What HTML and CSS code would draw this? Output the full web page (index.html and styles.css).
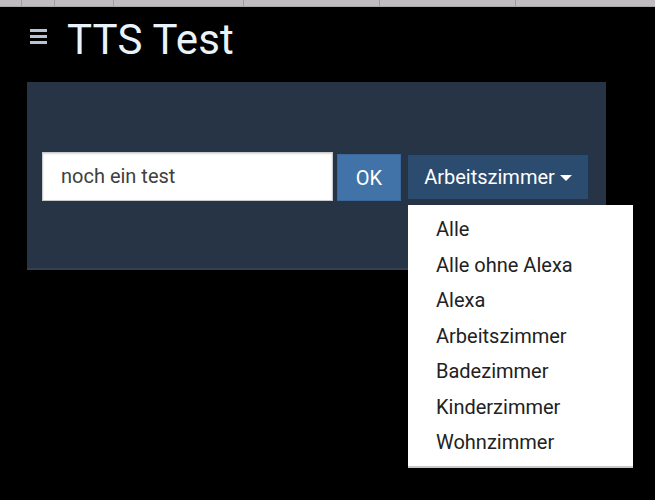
FILE: index.html
```html
<!DOCTYPE html>
<html lang="de">
<head>
<meta charset="utf-8">
<title>TTS Test</title>
<link rel="stylesheet" href="styles.css">
</head>
<body>
<div class="tabstrip">
  <span class="tab t1"></span><span class="tab t2"></span><span class="tab t3"></span><span class="tab t4"></span><span class="tab t5"></span><span class="tab t6"></span><span class="tab t7"></span>
</div>
<header class="header">
  <span class="burger"><i></i><i></i><i></i></span>
  <h1 class="title">TTS Test</h1>
</header>
<main class="panel">
  <div class="row">
    <div class="input">noch ein test</div>
    <button class="btn btn-ok">OK</button>
    <div class="dd">
      <button class="btn btn-room">Arbeitszimmer <span class="caret"></span></button>
      <ul class="menu">
        <li>Alle</li>
        <li>Alle ohne Alexa</li>
        <li>Alexa</li>
        <li>Arbeitszimmer</li>
        <li>Badezimmer</li>
        <li>Kinderzimmer</li>
        <li>Wohnzimmer</li>
      </ul>
    </div>
  </div>
</main>
</body>
</html>
```
FILE: styles.css
```css
* { box-sizing: border-box; }
html, body { margin: 0; padding: 0; }
body {
  background: #000;
  font-family: Roboto, "Liberation Sans", Arial, sans-serif;
  width: 655px;
  height: 500px;
  overflow: hidden;
}
.tabstrip {
  display: flex;
  height: 7px;
  background: #bfbdc0;
  border-bottom: 1px solid #a9a7aa;
}
.tab { border-right: 1px solid #9e9c9f; height: 100%; }
.t1 { width: 22px; }
.t2 { width: 33px; }
.t3 { width: 59px; }
.t4 { width: 130px; }
.t5 { width: 136px; }
.t6 { width: 136px; }
.t7 { flex: 1; border-right: none; }

.header {
  display: flex;
  align-items: flex-start;
  height: 75px;
  padding-left: 30px;
}
.burger {
  display: flex;
  flex-direction: column;
  gap: 3px;
  width: 17px;
  margin-top: 22px;
}
.burger i {
  display: block;
  height: 3px;
  background: #b8c4d3;
}
.title {
  margin: 8px 0 0 20px;
  font-weight: 400;
  font-size: 42px;
  line-height: 50px;
  color: #eaf2fb;
  letter-spacing: 0.2px;
}
.panel {
  margin-left: 27px;
  width: 579px;
  height: 188px;
  background: #263445;
  border-bottom: 2px solid #34404f;
  padding: 70px 0 0 15px;
}
.row {
  display: flex;
  align-items: flex-start;
}
.input {
  width: 291px;
  height: 49px;
  background: #fff;
  border: 1px solid #c9cbcd;
  box-shadow: inset 0 1px 2px rgba(0,0,0,0.15);
  padding: 0 0 0 18px;
  font-size: 20px;
  line-height: 46px;
  color: #404040;
}
.btn {
  font-family: inherit;
  font-size: 20px;
  color: #fff;
  border: 1px solid transparent;
  height: 47px;
  margin-top: 2px;
  padding: 0;
  cursor: pointer;
}
.btn-ok {
  width: 64px;
  margin-left: 4px;
  background: #4173a8;
  border-color: #3a689a;
}
.btn-room {
  width: 182px;
  margin-left: 6px;
  background: #2b4b6f;
  border-color: #1f3651;
  height: 46px;
  display: flex;
  align-items: center;
  justify-content: center;
  gap: 5px;
}
.caret {
  width: 0;
  height: 0;
  border-left: 6px solid transparent;
  border-right: 6px solid transparent;
  border-top: 6px solid #fff;
  margin-top: 2px;
}
.dd { position: relative; }
.menu {
  position: absolute;
  top: 53px;
  left: 7px;
  width: 225px;
  height: 263px;
  margin: 0;
  padding: 7px 0 0 0;
  list-style: none;
  background: #fff;
  border-bottom: 2px solid #c8c8c8;
}
.menu li {
  height: 35.5px;
  line-height: 35.5px;
  padding-left: 28px;
  font-size: 20px;
  color: #222;
}
```
